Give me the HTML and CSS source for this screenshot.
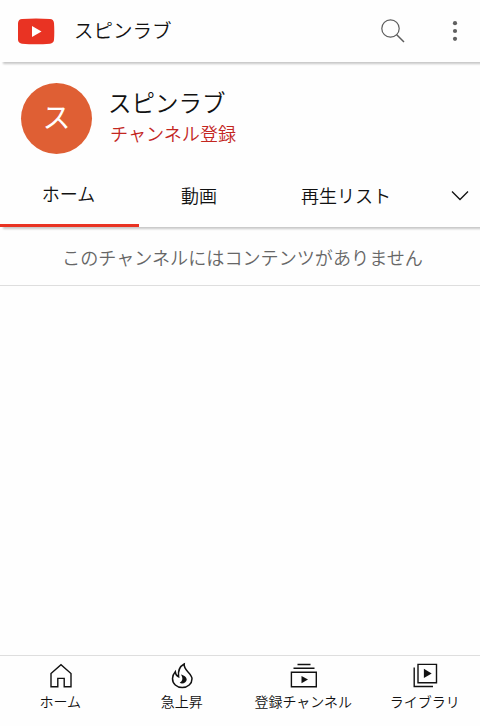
FILE: index.html
```html
<!DOCTYPE html>
<html lang="ja">
<head>
<meta charset="utf-8">
<title>スピンラブ</title>
<link rel="stylesheet" href="styles.css">
</head>
<body>
<div class="app">
  <header class="topbar">
    <svg class="logo" width="37" height="27" viewBox="0 0 37 27"><path fill="#e93323" d="M4 1Q18 -.2 32 1Q35.500 1.200 36 5Q36.600 13.500 36 22Q35.500 25.400 32 25.700Q18 26.800 4 25.700Q.5 25.400 0 22Q-.6 13.500 0 5Q.5 1.200 4 1Z"/><path fill="#fff" d="M14 8v11l9.500-5.500z"/></svg>
    <h1 class="topbar-title">スピンラブ</h1>
    <svg class="search" width="26" height="26" viewBox="0 0 26 26" fill="none" stroke="#5c5c5c"><circle cx="10.500" cy="10.500" r="8.700" stroke-width="1.200"/><path d="M16.700 16.700L24 24" stroke-width="1.500"/></svg>
    <svg class="more" width="6" height="22" viewBox="0 0 6 22" fill="#606060"><circle cx="3" cy="3.200" r="2.100"/><circle cx="3" cy="11" r="2.100"/><circle cx="3" cy="18.800" r="2.100"/></svg>
  </header>
  <section class="channel">
    <div class="avatar">ス</div>
    <div class="channel-info">
      <h2 class="channel-name">スピンラブ</h2>
      <a class="subscribe">チャンネル登録</a>
    </div>
  </section>
  <nav class="tabs">
    <a class="tab tab-active">ホーム</a>
    <a class="tab">動画</a>
    <a class="tab tab-wide">再生リスト</a>
    <svg class="chevron" width="18" height="12" viewBox="0 0 18 12" fill="none" stroke="#111" stroke-width="1.300"><path d="M1 1.500L9 9.500L17 1.500"/></svg>
  </nav>
  <main class="content">
    <p class="message">このチャンネルにはコンテンツがありません</p>
  </main>
  <nav class="bottom">
    <a class="item">
      <svg width="28" height="28" viewBox="0 0 28 28" fill="none" stroke="#111" stroke-width="1.400"><path d="M4 11.500L14 2.800L24 11.500V24.700H17.200V16.400H10.800V24.700H4Z"/></svg>
      <span>ホーム</span>
    </a>
    <a class="item">
      <svg width="28" height="28" viewBox="0 0 28 28"><path fill="none" stroke="#111" stroke-width="1.500" d="M16.200 2C11.500 4.500 9.800 8.600 10.600 14.800C8.600 13.800 7.400 12 7.300 9.700C5.300 12 4.500 14.200 4.500 16.500C4.500 21.800 8.700 25.600 14.200 25.600C19.800 25.600 24 21.800 24 16.700C24 11.300 15.300 8.300 16.200 2Z"/><path fill="#111" d="M12.900 12.500C15.700 13.300 18.700 15 18.700 17.600C18.700 20 16.500 21.500 14 21.500C13.100 21.500 12.200 21.200 11.700 20.600C14.800 19.300 15.200 15.800 12.900 12.500Z"/></svg>
      <span>急上昇</span>
    </a>
    <a class="item">
      <svg width="28" height="28" viewBox="0 0 28 28" fill="none" stroke="#111" stroke-width="1.400"><path d="M7.500 2.500H20.500M3.500 6.300H24.500M1.400 10.200H26.300V24.700H1.400Z"/><path fill="#111" stroke="none" d="M11.500 14v7.200l6.500-3.600z"/></svg>
      <span>登録チャンネル</span>
    </a>
    <a class="item">
      <svg width="28" height="28" viewBox="0 0 28 28" fill="none" stroke="#111" stroke-width="1.400"><path d="M7 2.400H25.500V20.700H7ZM3.200 5.500V24.500H22"/><path fill="#111" stroke="none" d="M12.900 6.800v9.200l7.800-4.600z"/></svg>
      <span>ライブラリ</span>
    </a>
  </nav>
</div>
</body>
</html>
```
FILE: styles.css
```css
* { box-sizing: border-box; }
body {
  margin: 0;
  background: #fefefe;
  color: #111;
  font-family: "Noto Sans CJK JP", sans-serif;
  font-weight: 350;
}
h1, h2, p { margin: 0; font-weight: 350; }
svg { display: block; flex: none; }
.app {
  height: 726px;
  display: flex;
  flex-direction: column;
  overflow: hidden;
}
.topbar {
  height: 62px;
  flex: none;
  display: flex;
  align-items: center;
  padding: 0 22px 0 18px;
  box-shadow: 3px 2px 2px #c8c8c8;
}
.topbar-title {
  margin: -2px 0 0 19px;
  font-size: 19.500px;
  line-height: 30px;
}
.search { margin-left: auto; }
.more { margin-left: 46px; }
.channel {
  height: 100px;
  flex: none;
  display: flex;
  padding: 21px 0 0 21px;
}
.avatar {
  width: 71px;
  height: 71px;
  border-radius: 50%;
  background: #df5f34;
  color: #fff;
  font-size: 28px;
  font-weight: 400;
  line-height: 67px;
  text-align: center;
}
.channel-info { padding-top: 1px; margin-left: 16px; }
.channel-name { font-size: 23.500px; line-height: 36px; }
.subscribe {
  display: block;
  margin-left: 2px;
  color: #c3261f;
  font-size: 18.100px;
  line-height: 26px;
}
.tabs {
  height: 65px;
  flex: none;
  display: flex;
  box-shadow: 3px 2px 2px #c8c8c8;
}
.tab {
  width: 120px;
  padding-top: 5px;
  font-size: 18px;
  line-height: 56px;
  text-align: center;
}
.tab-active {
  width: 139px;
  border-bottom: 3px solid #e93323;
  padding: 3px 2px 0 0;
}
.tab-wide { width: 174px; }
.chevron { margin: 28px 0 0 18px; }
.content { flex: 1; }
.message {
  height: 59px;
  padding-left: 5px;
  border-bottom: 1px solid #dedede;
  color: #666;
  font-size: 18.100px;
  line-height: 60px;
  text-align: center;
}
.bottom {
  height: 71px;
  flex: none;
  display: grid;
  grid-template-columns: repeat(4, 121.500px);
  border-top: 1px solid #dedede;
}
.item {
  display: flex;
  flex-direction: column;
  align-items: center;
  padding-top: 6px;
  font-size: 14px;
  line-height: 22px;
}
.item span { margin-right: 1px; }
```
